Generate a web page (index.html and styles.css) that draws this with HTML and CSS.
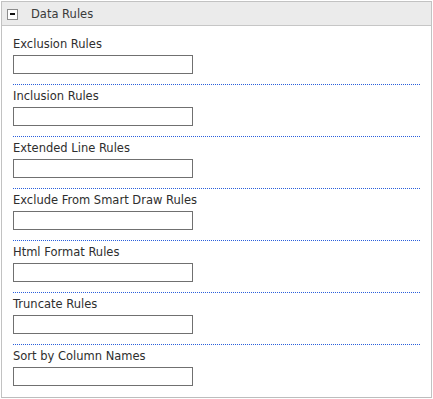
FILE: index.html
```html
<!DOCTYPE html>
<html lang="en">
<head>
  <meta charset="UTF-8">
  <title>Data Rules</title>
  <link rel="stylesheet" href="styles.css">
</head>
<body>

  <div class="panel">
    <div class="panel-header">
      <span class="toggle"><span class="toggle-bar"></span></span>
      <span class="panel-title">Data Rules</span>
    </div>

    <div class="panel-body">
      <div class="rule-row">
        <label for="exclusionRules">Exclusion Rules</label>
        <input type="text" id="exclusionRules">
      </div>
      <div class="rule-row">
        <label for="inclusionRules">Inclusion Rules</label>
        <input type="text" id="inclusionRules">
      </div>
      <div class="rule-row">
        <label for="extendedLineRules">Extended Line Rules</label>
        <input type="text" id="extendedLineRules">
      </div>
      <div class="rule-row">
        <label for="smartDrawRules">Exclude From Smart Draw Rules</label>
        <input type="text" id="smartDrawRules">
      </div>
      <div class="rule-row">
        <label for="htmlFormatRules">Html Format Rules</label>
        <input type="text" id="htmlFormatRules">
      </div>
      <div class="rule-row">
        <label for="truncateRules">Truncate Rules</label>
        <input type="text" id="truncateRules">
      </div>
      <div class="rule-row">
        <label for="sortColumns">Sort by Column Names</label>
        <input type="text" id="sortColumns">
      </div>
    </div>
  </div>

</body>
</html>
```

FILE: styles.css
```css
body {
  margin: 1px;
  font-family: 'DejaVu Sans', Verdana, sans-serif;
  font-size: 11.5px;
  color: #2e2e2e;
  background: white;
}
.panel {
  border: 1px solid #c2c2c2;
  border-bottom-color: #bdbdbd;
}
.panel-header {
  display: flex;
  align-items: center;
  height: 23px;
  background-color: #ebebeb;
  border-bottom: 1px solid #c6c6c6;
}
/* collapse box */
.toggle {
  display: flex;
  align-items: center;
  justify-content: center;
  box-sizing: border-box;
  width: 11px;
  height: 11px;
  margin-left: 5px;
  margin-top: 1px;
  background: white;
  border: 1px solid #8c8c8c;
}
.toggle-bar {
  width: 5px;
  height: 2px;
  background: #111;
}
.panel-title {
  margin-left: 13px;
  color: #3a3a3a;
}
.panel-body {
  padding: 7px 11px 0;
}
/* dotted blue separator, 1px dot / 1px gap */
.rule-row {
  padding: 3px 0 11px;
  background-image: linear-gradient(to right, #2a5fdc 50%, transparent 50%);
  background-size: 2px 1px;
  background-position: left bottom;
  background-repeat: repeat-x;
}
.rule-row:last-child {
  background-image: none;
}
.rule-row label {
  display: block;
  line-height: 16px;
  margin-bottom: 3px;
}
.rule-row input {
  display: block;
  box-sizing: border-box;
  width: 180px;
  height: 19px;
  margin: 0;
  padding: 1px 3px;
  border: 1px solid #707070;
  font-family: inherit;
  font-size: 11px;
}
```
